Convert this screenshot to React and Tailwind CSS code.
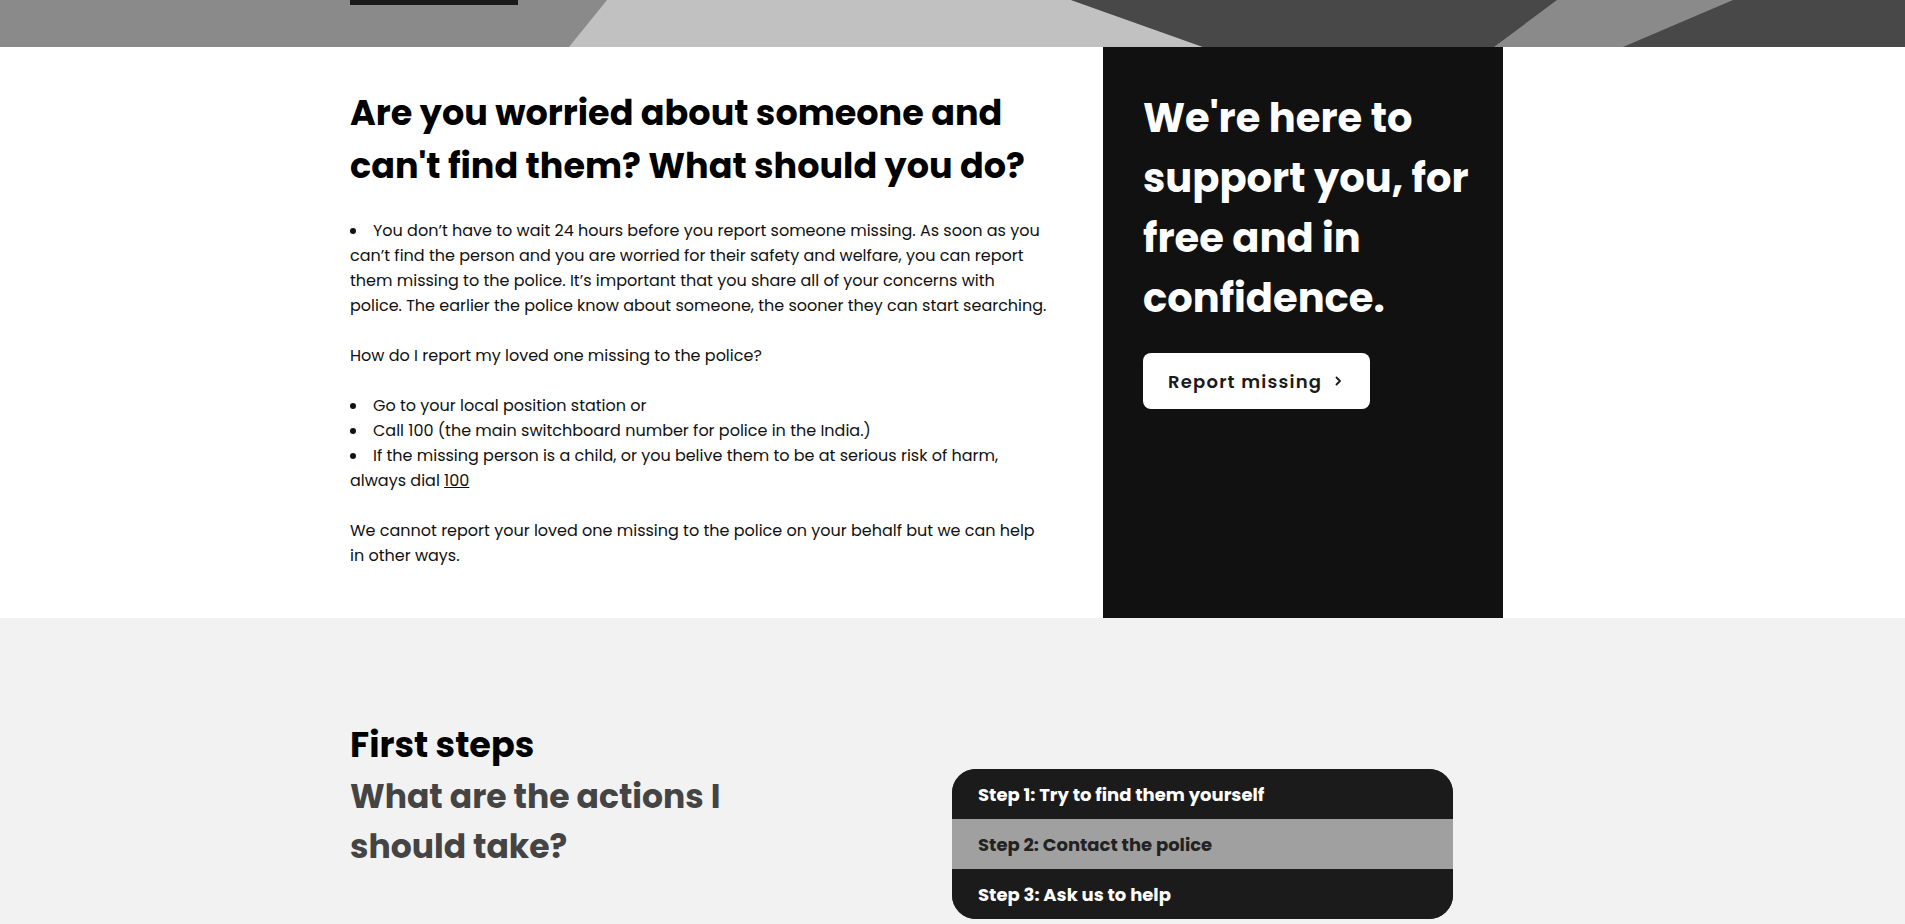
import React from "react";

// Page-wide font stack
const FONT = "font-['Poppins','DejaVu_Sans',sans-serif]";

const STEPS = [
  { label: "Step 1: Try to find them yourself", active: false },
  { label: "Step 2: Contact the police", active: true },
  { label: "Step 3: Ask us to help", active: false },
];

function Banner() {
  return (
    <div className="relative h-[47px] overflow-hidden bg-[#8a8a8a]">
      <svg
        className="absolute inset-0 h-full w-full"
        viewBox="0 0 1905 47"
        preserveAspectRatio="none"
      >
        <polygon points="607,0 1071,0 1203,47 569,47" fill="#c1c1c1" />
        <polygon points="1071,0 1557,0 1494,47 1203,47" fill="#484848" />
        <polygon points="1733,0 1905,0 1905,47 1623,47" fill="#484848" />
      </svg>
      <div className="relative mx-auto w-[1205px]">
        <div className="h-[5px] w-[168px] bg-[#1a1a1a]" />
      </div>
    </div>
  );
}

function WorriedSection() {
  return (
    <section className="bg-white">
      <div className="mx-auto flex w-[1205px]">
        <div className="mr-[53px] w-[700px] pt-[39px] pb-[50px] text-[#111]">
          <h2 className="text-[35px] font-bold leading-[53px] text-black">
            Are you worried about someone and can't find them? What should you do?
          </h2>
          <div className="mt-[26px] text-[16px] leading-[25px]">
            <ul className="list-inside list-disc">
              <li>
                You don’t have to wait 24 hours before you report someone missing. As soon as you can’t find the person and you are worried for their safety and welfare, you can report them missing to the police. It’s important that you share all of your concerns with police. The earlier the police know about someone, the sooner they can start searching.
              </li>
            </ul>
            <p className="mt-[25px]">How do I report my loved one missing to the police?</p>
            <ul className="mt-[25px] list-inside list-disc">
              <li>Go to your local position station or</li>
              <li>Call 100 (the main switchboard number for police in the India.)</li>
              <li>
                If the missing person is a child, or you belive them to be at serious risk of harm, always dial{" "}
                <a href="#" className="underline">100</a>
              </li>
            </ul>
            <p className="mt-[25px] pr-[10px]">
              We cannot report your loved one missing to the police on your behalf but we can help in other ways.
            </p>
          </div>
        </div>
        <aside className="w-[400px] bg-[#111111] pl-[40px] pr-[20px] pt-[41px] text-white">
          <h3 className="text-[40px] font-bold leading-[60px]">
            We're here to support you, for free and in confidence.
          </h3>
          <button className="mt-[25px] flex h-[56px] items-center gap-[12px] rounded-[8px] bg-white pl-[25px] pr-[28px] text-[18px] font-semibold tracking-[1.2px] text-[#1a1a1a]">
            Report missing
            <svg width="8" height="10" viewBox="0 0 8 10" fill="none">
              <path d="M2.5 1.5l3.5 3.5-3.5 3.5" stroke="#1a1a1a" strokeWidth="1.8" strokeLinecap="round" strokeLinejoin="round" />
            </svg>
          </button>
        </aside>
      </div>
    </section>
  );
}

function FirstSteps() {
  return (
    <section className="bg-[#f2f2f2]">
      <div className="mx-auto flex w-[1205px] items-start pt-[104px] pb-[120px]">
        <div className="w-[602px]">
          <h2 className="text-[35px] font-bold leading-[46px] text-black">First steps</h2>
          <p className="mt-[4px] text-[33px] font-bold leading-[50px] text-[#444]">
            What are the actions I
            <br />
            should take?
          </p>
        </div>
        <div className="mt-[47px] w-[501px] overflow-hidden rounded-[24px] bg-[#1b1b1b]">
          {STEPS.map((step) => (
            <div
              key={step.label}
              className={`flex h-[50px] items-center px-[26px] text-[18px] font-bold ${
                step.active ? "bg-[#a0a0a0] text-[#222]" : "bg-[#1b1b1b] text-white"
              }`}
            >
              {step.label}
            </div>
          ))}
        </div>
      </div>
    </section>
  );
}

export default function App() {
  return (
    <div className={`${FONT} min-h-screen bg-white`}>
      <Banner />
      <WorriedSection />
      <FirstSteps />
    </div>
  );
}
